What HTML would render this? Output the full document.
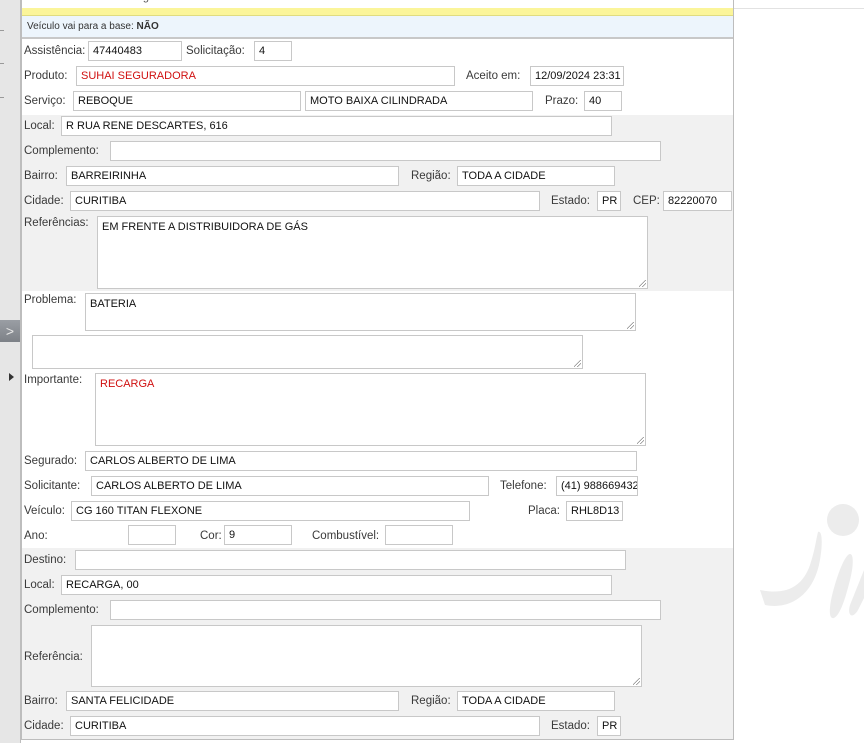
<!DOCTYPE html>
<html><head><meta charset="utf-8"><style>
body{margin:0;width:864px;height:743px;overflow:hidden;background:#fff;font-family:"Liberation Sans",Arial,sans-serif;font-size:11.5px;color:#3a3a3a;position:relative}
.a{position:absolute}
.l{position:absolute;line-height:21px;white-space:nowrap}
.i{position:absolute;box-sizing:border-box;border:1px solid #c8c8c8;background:#fff;height:20px;line-height:19px;padding-left:4px;font-size:11px;color:#111;white-space:nowrap;overflow:hidden}
.t{position:absolute;box-sizing:border-box;border:1px solid #c8c8c8;background:#fff;padding:4px 4px;font-size:11px;color:#111}
.t:after{content:"";position:absolute;right:1px;bottom:1px;width:7px;height:7px;background:linear-gradient(135deg,transparent 45%,#888 45%,#888 52%,transparent 52%,transparent 70%,#888 70%,#888 77%,transparent 77%)}
.r{color:#d01010}
</style></head><body>
<div class="a" style="left:734px;top:8px;width:130px;height:1px;background:#e2e2e2"></div>
<svg class="a" style="left:730px;top:470px" width="134" height="150"><g fill="#ececec"><circle cx="113" cy="50" r="16"/><path d="M30 120 C55 125 72 118 80 95 C85 80 86 70 88 62 C92 60 93 72 90 90 C84 125 60 140 35 135 Z"/><path d="M118 85 C124 80 124 95 120 110 C115 130 110 145 104 148 C98 150 99 135 104 118 C108 104 113 90 118 85 Z"/><path d="M134 100 C130 110 124 125 120 135 C117 145 122 150 128 140 L134 128 Z"/></g></svg>
<div class="a" style="left:0;top:0;width:20px;height:743px;background:#e6e6e6;border-right:1px solid #bdbdbd"></div>
<div class="a" style="left:0;top:30px;width:4px;height:1px;background:#999"></div>
<div class="a" style="left:0;top:63px;width:4px;height:1px;background:#999"></div>
<div class="a" style="left:0;top:97px;width:4px;height:1px;background:#999"></div>
<div class="a" style="left:0;top:320px;width:20px;height:22px;background:linear-gradient(#9a9ea4,#7d8187);color:#e8e8e8;font-size:14px;line-height:22px;text-align:center">&gt;</div>
<div class="a" style="left:9px;top:373px;width:0;height:0;border-left:5px solid #333;border-top:4px solid transparent;border-bottom:4px solid transparent"></div>
<div class="a" style="left:21px;top:0;width:713px;height:740px;border-left:1px solid #bdbdbd;border-right:1px solid #bdbdbd;border-bottom:1px solid #bdbdbd;box-sizing:border-box"></div>
<div class="a" style="left:22px;top:0;width:711px;height:8px;background:#fff;overflow:hidden"><span style="position:absolute;left:12px;top:-9px;font-size:11px;color:#555">Dados do veículo e segurado</span></div>
<div class="a" style="left:22px;top:8px;width:711px;height:7px;background:#fbf59a;border-bottom:1px solid #e0dc80"></div>
<div class="a" style="left:22px;top:16px;width:711px;height:21px;background:#edf5fc;border-bottom:2px solid #c8c8c8;font-size:10px;line-height:21px;color:#333"><span style="padding-left:5px">Veículo vai para a base: <b>NÃO</b></span></div>
<div class="a" style="left:22px;top:115px;width:711px;height:176px;background:#f1f1f1"></div>
<div class="a" style="left:22px;top:548px;width:711px;height:191px;background:#f1f1f1"></div>

<div class="l" style="left:24px;top:41px">Assistência:</div><div class="i" style="left:88px;top:41px;width:94px">47440483</div>
<div class="l" style="left:186px;top:41px">Solicitação:</div><div class="i" style="left:254px;top:41px;width:38px">4</div>
<div class="l" style="left:24px;top:66px">Produto:</div><div class="i r" style="left:76px;top:66px;width:379px">SUHAI SEGURADORA</div>
<div class="l" style="left:466px;top:66px">Aceito em:</div><div class="i" style="left:530px;top:66px;width:94px">12/09/2024 23:31</div>
<div class="l" style="left:24px;top:91px">Serviço:</div><div class="i" style="left:73px;top:91px;width:228px">REBOQUE</div>
<div class="i" style="left:305px;top:91px;width:228px">MOTO BAIXA CILINDRADA</div>
<div class="l" style="left:545px;top:91px">Prazo:</div><div class="i" style="left:584px;top:91px;width:38px">40</div>

<div class="l" style="left:24px;top:116px">Local:</div><div class="i" style="left:61px;top:116px;width:551px">R RUA RENE DESCARTES, 616</div>
<div class="l" style="left:24px;top:141px">Complemento:</div><div class="i" style="left:110px;top:141px;width:551px"></div>
<div class="l" style="left:24px;top:166px">Bairro:</div><div class="i" style="left:66px;top:166px;width:333px">BARREIRINHA</div>
<div class="l" style="left:411px;top:166px">Região:</div><div class="i" style="left:457px;top:166px;width:158px">TODA A CIDADE</div>
<div class="l" style="left:24px;top:191px">Cidade:</div><div class="i" style="left:70px;top:191px;width:470px">CURITIBA</div>
<div class="l" style="left:551px;top:191px">Estado:</div><div class="i" style="left:597px;top:191px;width:24px">PR</div>
<div class="l" style="left:633px;top:191px">CEP:</div><div class="i" style="left:663px;top:191px;width:69px">82220070</div>
<div class="l" style="left:24px;top:213px">Referências:</div><div class="t" style="left:97px;top:216px;width:551px;height:73px">EM FRENTE A DISTRIBUIDORA DE GÁS</div>

<div class="l" style="left:24px;top:290px">Problema:</div><div class="t" style="left:85px;top:293px;width:551px;height:38px">BATERIA</div>
<div class="t" style="left:32px;top:335px;width:551px;height:34px"></div>
<div class="l" style="left:24px;top:370px">Importante:</div><div class="t r" style="left:95px;top:373px;width:551px;height:73px">RECARGA</div>
<div class="l" style="left:24px;top:451px">Segurado:</div><div class="i" style="left:85px;top:451px;width:552px">CARLOS ALBERTO DE LIMA</div>
<div class="l" style="left:24px;top:476px">Solicitante:</div><div class="i" style="left:91px;top:476px;width:398px">CARLOS ALBERTO DE LIMA</div>
<div class="l" style="left:500px;top:476px">Telefone:</div><div class="i" style="left:556px;top:476px;width:82px">(41) 988669432</div>
<div class="l" style="left:24px;top:501px">Veículo:</div><div class="i" style="left:71px;top:501px;width:399px">CG 160 TITAN FLEXONE</div>
<div class="l" style="left:528px;top:501px">Placa:</div><div class="i" style="left:566px;top:501px;width:57px">RHL8D13</div>
<div class="l" style="left:24px;top:526px">Ano:</div><div class="i" style="left:128px;top:525px;width:48px"></div>
<div class="l" style="left:200px;top:526px">Cor:</div><div class="i" style="left:224px;top:525px;width:68px">9</div>
<div class="l" style="left:312px;top:526px">Combustível:</div><div class="i" style="left:385px;top:525px;width:68px"></div>

<div class="l" style="left:24px;top:550px">Destino:</div><div class="i" style="left:75px;top:550px;width:551px"></div>
<div class="l" style="left:24px;top:575px">Local:</div><div class="i" style="left:61px;top:575px;width:551px">RECARGA, 00</div>
<div class="l" style="left:24px;top:600px">Complemento:</div><div class="i" style="left:110px;top:600px;width:551px"></div>
<div class="l" style="left:24px;top:647px">Referência:</div><div class="t" style="left:91px;top:625px;width:551px;height:62px"></div>
<div class="l" style="left:24px;top:691px">Bairro:</div><div class="i" style="left:66px;top:691px;width:333px">SANTA FELICIDADE</div>
<div class="l" style="left:411px;top:691px">Região:</div><div class="i" style="left:457px;top:691px;width:158px">TODA A CIDADE</div>
<div class="l" style="left:24px;top:716px">Cidade:</div><div class="i" style="left:70px;top:716px;width:470px">CURITIBA</div>
<div class="l" style="left:551px;top:716px">Estado:</div><div class="i" style="left:597px;top:716px;width:24px">PR</div>
</body></html>
